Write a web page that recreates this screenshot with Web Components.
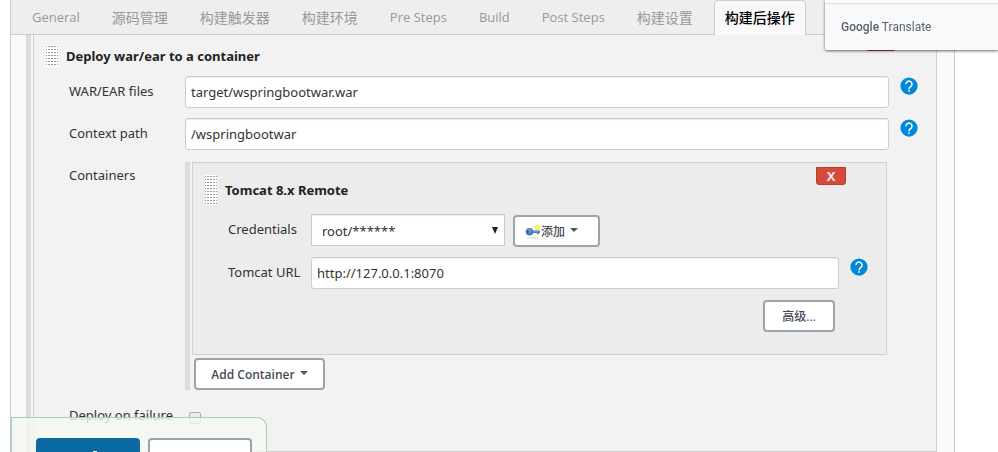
<!DOCTYPE html>
<html lang="zh-CN">
<head>
<meta charset="utf-8">
<meta name="viewport" content="width=device-width, initial-scale=1">
<title>构建后操作</title>
<style>
  html, body { margin: 0; height: 100%; }
  body { background: #fff; color: #333; overflow: hidden; font: 13px/20px "Noto Sans", "Noto Sans CJK SC", sans-serif; }
</style>
</head>
<body>
<config-page>
  <config-tabs slot="tabs">
    <config-tab latin>General</config-tab>
    <config-tab>源码管理</config-tab>
    <config-tab>构建触发器</config-tab>
    <config-tab>构建环境</config-tab>
    <config-tab latin>Pre Steps</config-tab>
    <config-tab latin>Build</config-tab>
    <config-tab latin>Post Steps</config-tab>
    <config-tab>构建设置</config-tab>
    <config-tab active>构建后操作</config-tab>
  </config-tabs>
  <repeat-list>
    <repeat-chunk outer heading="Deploy war/ear to a container">
      <text-row label="WAR/EAR files" value="target/wspringbootwar.war"></text-row>
      <text-row label="Context path" value="/wspringbootwar"></text-row>
      <form-row label="Containers" nested>
        <repeat-list>
          <repeat-chunk heading="Tomcat 8.x Remote">
            <credentials-row></credentials-row>
            <text-row label="Tomcat URL" value="http://127.0.0.1:8070"></text-row>
            <form-row class="end"><push-button class="advanced">高级...</push-button></form-row>
          </repeat-chunk>
          <push-button class="add" menu>Add Container</push-button>
        </repeat-list>
      </form-row>
      <check-row label="Deploy on failure"></check-row>
    </repeat-chunk>
  </repeat-list>
</config-page>
<save-bar></save-bar>
<translate-popup></translate-popup>

<script>
const define = (name, html, setup) => customElements.define(name, class extends HTMLElement {
  connectedCallback() {
    if (this.shadowRoot) return;
    const root = this.attachShadow({ mode: "open" });
    root.innerHTML = html;
    if (setup) setup(this, root);
  }
});

define("config-page", `
  <style>
    :host { display: block; box-sizing: border-box; min-height: 100%; margin: 0 43px 0 10px; border: solid #ccc; border-width: 0 1px; background: #f9f9f9; }
    main { display: block; padding: 0 17px 0 15px; }
  </style>
  <slot name="tabs"></slot><main><slot></slot></main>`);

define("config-tabs", `
  <style>
    :host { display: block; background: #eee; border-bottom: 1px solid #ccc; }
    nav { display: flex; gap: 10px; height: 34px; padding-left: 10px; }
  </style>
  <nav><slot></slot></nav>`);

define("config-tab", `
  <style>
    :host { display: block; height: 35px; flex: none; }
    a { display: block; box-sizing: border-box; height: 35px; padding: 0 10px; border: 1px solid transparent; border-bottom: 0; border-radius: 4px 4px 0 0; color: #999; font-size: 14px; line-height: 33px; text-decoration: none; white-space: nowrap; }
    :host([latin]) a { font: 13px/33px "Open Sans", sans-serif; }
    :host([active]) a { background: #f9f9f9; border-color: #ccc; color: #000; font-weight: 500; }
  </style>
  <a href="#"><slot></slot></a>`);

define("repeat-list", `
  <style>
    :host { display: block; border-left: 5px solid #ddd; padding-left: 2px; }
    ::slotted(.add) { margin: 3px 0 0 2px; --button-width: 131px; --button-weight: 600; }
  </style>
  <slot></slot>`);

define("repeat-chunk", `
  <style>
    :host { display: block; position: relative; background: #ececec; border: 1px solid #d0d0d0; --label-width: 83px; }
    :host([outer]) { background: #f2f2f2; border-top: 0; --label-width: 116px; }
    header { display: flex; gap: 8px; height: 39px; padding: 12px 0 0 12px; }
    :host([outer]) header { height: 31px; padding-top: 10px; }
    .grip { width: 12px; height: 30px; background: conic-gradient(from 90deg at 1px 1px, #fff 75%, #999 0) 1px 1px / 3px 3px #fff; }
    :host([outer]) .grip { height: 22px; }
    h3 { margin: 0; font-size: 13px; line-height: 30px; font-weight: 700; color: #222; }
    :host([outer]) h3 { line-height: 22px; }
    .rows { display: grid; gap: 10px; padding: 0 0 22px 35px; }
    :host([outer]) .rows { padding-bottom: 26px; }
    button { position: absolute; top: 4px; right: 40px; width: 30px; height: 18px; padding: 0; border: 1px solid #c13a2b; border-radius: 0 0 3px 3px; background: #d54b3b; color: #eee; font: 700 13px/16px "Open Sans", sans-serif; }
    :host([outer]) button { top: -2px; }
  </style>
  <header><span class="grip"></span><h3></h3></header>
  <button type="button">X</button>
  <div class="rows"><slot></slot></div>`,
  (el, root) => {
    root.querySelector("h3").textContent = el.getAttribute("heading");
    if (el.hasAttribute("outer")) {
      const b = root.querySelector("button");
      b.textContent = "";
      b.setAttribute("aria-label", "Delete");
    }
  });

const rowStyle = `
    :host { display: grid; grid-template-columns: var(--label-width) minmax(0, 1fr) 47px; align-items: start; }
    label, .label { padding-top: 5px; line-height: 20px; font-size: 13px; white-space: nowrap; }`;

define("form-row", `
  <style>${rowStyle}
    .body { display: block; }
    :host([nested]) .body { padding: 2px 2px 0 0; }
    :host(.end) .body { display: flex; justify-content: flex-end; padding: 1px 4px 0 0; }
    ::slotted(.advanced) { --button-width: 72px; }
  </style>
  <span class="label"></span><div class="body"><slot></slot></div>`,
  (el, root) => { root.querySelector(".label").textContent = el.getAttribute("label") || ""; });

define("text-row", `
  <style>${rowStyle}
    input { box-sizing: border-box; width: 100%; height: 32px; padding: 0 5px; border: 1px solid #ccc; border-radius: 3px; background: #fff; box-shadow: inset 0 1px 1px rgba(0,0,0,.08); color: #333; font: 13px/20px "Noto Sans", sans-serif; }
    help-icon { margin: 1px 0 0 11px; }
  </style>
  <label for="field"></label><input id="field" type="text"><help-icon></help-icon>`,
  (el, root) => {
    root.querySelector("label").textContent = el.getAttribute("label");
    root.querySelector("input").value = el.getAttribute("value");
  });

define("credentials-row", `
  <style>${rowStyle}
    .body { display: flex; gap: 8px; }
    .select { display: block; position: relative; width: 194px; }
    select { appearance: none; box-sizing: border-box; display: block; width: 100%; height: 32px; padding: 2px 20px 0 10px; border: 1px solid #ccc; border-radius: 0; background: #fff; color: #333; font: 13px/20px "Noto Sans", sans-serif; box-shadow: inset 0 1px 1px rgba(0,0,0,.08); }
    .select svg { position: absolute; right: 7px; top: 13px; pointer-events: none; }
    push-button { margin-top: 1px; --button-width: 87px; --button-justify: flex-start; --button-padding: 10px; }
  </style>
  <label for="cred">Credentials</label>
  <div class="body">
    <span class="select">
      <select id="cred"><option>root/******</option></select>
      <svg width="6" height="7" viewBox="0 0 6 7"><path d="M0 0h6L3 7z" fill="#222"/></svg>
    </span>
    <push-button menu>
      <svg slot="icon" width="16" height="16" viewBox="0 0 16 16">
        <ellipse cx="8" cy="14" rx="6" ry="1" fill="#e4e4e4"/>
        <path d="M7 6.500h8v2.500h-1v1h-2v-1H7z" fill="#4a7ab8"/>
        <path d="M8 6.800h6v.8H8z" fill="#7fa5d6"/>
        <circle cx="4.500" cy="7.800" r="3.800" fill="#4a77b4"/>
        <circle cx="4.500" cy="6.800" r="2.200" fill="#6b95cb"/><circle cx="2.800" cy="7.800" r="1" fill="#2d5488"/>
        <circle cx="12.500" cy="3.500" r="2.500" fill="#f9ee38"/><circle cx="12.500" cy="3.500" r="1" fill="#fffbd0"/>
      </svg>添加</push-button>
  </div>`);

define("check-row", `
  <style>${rowStyle}
    input { appearance: none; box-sizing: border-box; width: 12px; height: 12px; margin: 12px 0 0 4px; border: 1px solid #aaa; border-radius: 2px; background: linear-gradient(#eee, #e0e0e0); }
  </style>
  <label for="check"></label><input id="check" type="checkbox">`,
  (el, root) => { root.querySelector("label").textContent = el.getAttribute("label"); });

define("push-button", `
  <style>
    :host { display: block; width: var(--button-width); }
    button { display: flex; align-items: center; justify-content: var(--button-justify, center); box-sizing: border-box; width: 100%; height: 32px; padding: 2px var(--button-padding, 0px) 0; border: 2px solid #98a5ae; border-radius: 4px; background: #fff; color: #444b54; font: var(--button-weight, 500) 12px/20px "Open Sans", "Noto Sans CJK SC", sans-serif; white-space: nowrap; }
    .caret { display: none; margin: 0 0 5px 5px; border: 4px solid transparent; border-top-color: #4d545d; border-bottom: 0; }
    :host([menu]) .caret { display: block; }
  </style>
  <button type="button"><slot name="icon"></slot><span><slot></slot></span><span class="caret"></span></button>`);

define("help-icon", `
  <style>
    :host { display: block; width: 18px; height: 18px; }
    a, svg { display: block; }
  </style>
  <a href="#" aria-label="Help"><svg width="18" height="18" viewBox="0 0 24 24"><circle cx="12" cy="12" r="11.500" fill="#0288d9"/><path d="M8 9.500a4 4 0 1 1 6.700 2.900c-1.500 1.300-2.700 2-2.700 3.800" fill="none" stroke="#fff" stroke-width="2"/><path d="M10.900 17.600h2.200v2.200h-2.200z" fill="#fff"/></svg></a>`);

define("save-bar", `
  <style>
    :host { position: fixed; left: 11px; bottom: 0; box-sizing: border-box; width: 256px; height: 35px; padding: 20px 14px 0 24px; display: flex; gap: 8px; overflow: hidden; border: 1px solid #a5cdbc; border-bottom: 0; border-radius: 0 10px 0 0; background: rgba(245, 249, 239, .8); }
    button { flex: 1; box-sizing: border-box; height: 32px; padding: 11px 0 0 55px; border: 2px solid #98a5ae; border-radius: 4px; background: #fff; }
    .save { display: flex; border-color: #0b6aa2; background: #0b6aa2; }
    .save::before { content: ""; width: 4px; height: 1px; background: #e5f0f6; }
  </style>
  <button class="save" type="button" aria-label="保存"></button><button type="button" aria-label="应用"></button>`);

define("translate-popup", `
  <style>
    :host { position: fixed; top: 0; right: 0; width: 173px; box-sizing: border-box; border-top: 3px solid #fff; border-radius: 0 0 0 2px; background: #f8f9fb; box-shadow: 0 1px 3px rgba(0,0,0,.6); }
    div { border-top: 1px solid #e0e0e0; padding: 13px 16px; color: #5f6368; font: 12px/20px Roboto, sans-serif; white-space: nowrap; }
    b { font-weight: 500; }
  </style>
  <div><b>Google</b> Translate</div>`);
</script>
</body>
</html>
